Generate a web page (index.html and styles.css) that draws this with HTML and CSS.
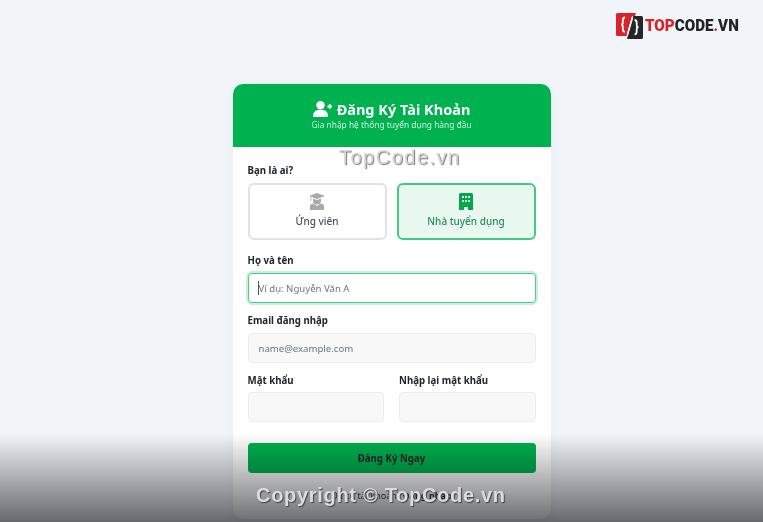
FILE: index.html
```html
<!DOCTYPE html>
<html lang="vi">

<head>
    <meta charset="UTF-8">
    <meta name="viewport" content="width=device-width, initial-scale=1.0">
    <title>Đăng Ký Tài Khoản</title>
    <link rel="stylesheet" href="styles.css">
</head>

<body>
    <div class="site-logo">
        <svg class="site-logo-icon" viewBox="0 0 27 27" width="27" height="27">
            <path d="M1.500 1H20l-1 3h-3L10.500 24H1.500A1.500 1.500 0 0 1 0 22.500V2.500A1.500 1.500 0 0 1 1.500 1z" fill="#d8232a" />
            <path d="M17 4h8.500A1.500 1.500 0 0 1 27 5.500V25.500A1.500 1.500 0 0 1 25.500 27H11z" fill="#262626" />
            <path d="M9 5.500c-2 0-2.200 1-2.200 2.800v2.400c0 1-0.800 2-1.800 2 1 0 1.800 1 1.800 2v2.400c0 1.800 0.200 2.800 2.200 2.800" fill="none" stroke="#fff" stroke-width="1.800" />
            <path d="M18.500 8c2 0 2.200 1 2.200 2.800v2.400c0 1 0.800 2 1.800 2-1 0-1.800 1-1.800 2v2.400c0 1.800-0.200 2.800-2.200 2.800" fill="none" stroke="#fff" stroke-width="1.800" />
            <path d="M16.500 5.500l-5 17" fill="none" stroke="#fff" stroke-width="1.600" />
        </svg>
        <span class="site-logo-text"><span class="logo-red">TOP</span>CODE<span class="logo-red">.</span>VN</span>
    </div>

    <main class="register-card">
        <div class="register-head">
            <h1 class="register-title">
                <svg class="register-title-icon" viewBox="0 0 20 16" width="20" height="16">
                    <circle cx="7.500" cy="4.200" r="4.200" fill="#fff" />
                    <path d="M0 16v-1.500c0-3 2.500-5.500 5-5.500h5c2.500 0 5 2.500 5 5.500V16z" fill="#fff" />
                    <path d="M16.800 3.200v4.600M14.500 5.500h4.600" stroke="#fff" stroke-width="1.800" />
                </svg>
                Đăng Ký Tài Khoản
            </h1>
            <p class="register-subtitle">Gia nhập hệ thống tuyển dụng hàng đầu</p>
        </div>

        <form class="register-form">
            <div class="form-group form-group-role">
                <label class="form-label">Bạn là ai?</label>
                <div class="role-list">
                    <div class="role-option">
                        <svg viewBox="0 0 16 17" width="16" height="17">
                            <path d="M8 0L0 3l8 3 8-3z" fill="#a9a9a9" />
                            <path d="M1.500 4v4h0.800V4.300z" fill="#a9a9a9" />
                            <path d="M4 5.600v1.900a4 4 0 0 0 8 0V5.600L8 7z" fill="#a9a9a9" />
                            <path d="M1 12.500c0-1 2-2 3.500-2L8 13l3.500-2.500c1.500 0 3.500 1 3.500 2V17H1z" fill="#a9a9a9" />
                        </svg>
                        <span>Ứng viên</span>
                    </div>
                    <div class="role-option role-option-active">
                        <svg viewBox="0 0 14 17" width="14" height="17">
                            <path fill-rule="evenodd" fill="#00a84b" d="M1.500 0h11A1.500 1.500 0 0 1 14 1.500V17H9v-3H5v3H0V1.500A1.500 1.500 0 0 1 1.500 0zM3 3v2h2V3zm3 0v2h2V3zm3 0v2h2V3zM3 7v2h2V7zm3 0v2h2V7zm3 0v2h2V7z" />
                        </svg>
                        <span>Nhà tuyển dụng</span>
                    </div>
                </div>
            </div>

            <div class="form-group">
                <label class="form-label" for="full-name">Họ và tên</label>
                <input class="form-input form-input-focus" id="full-name" type="text" placeholder="Ví dụ: Nguyễn Văn A">
                <span class="input-caret"></span>
            </div>

            <div class="form-group">
                <label class="form-label" for="email">Email đăng nhập</label>
                <input class="form-input" id="email" type="text" placeholder="name@example.com">
            </div>

            <div class="form-row">
                <div class="form-group">
                    <label class="form-label" for="password">Mật khẩu</label>
                    <input class="form-input" id="password" type="password">
                </div>
                <div class="form-group">
                    <label class="form-label" for="password-again">Nhập lại mật khẩu</label>
                    <input class="form-input" id="password-again" type="password">
                </div>
            </div>

            <button class="register-submit" type="button">Đăng Ký Ngay</button>
            <p class="register-footer">Đã có tài khoản? <a href="#">Đăng nhập</a></p>
        </form>
    </main>

    <!-- video overlay on top of the page -->
    <div class="bottom-shade"></div>
    <div class="watermark watermark-top">TopCode.vn</div>
    <div class="watermark watermark-bottom">Copyright © TopCode.vn</div>
</body>

</html>
```

FILE: styles.css
```css
* {
    box-sizing: border-box;
}

html,
body {
    height: 522px;
    overflow: hidden;
}

body {
    margin: 0;
    padding-top: 84px;
    padding-left: 20px;
    background-color: #f1f4f9;
    font-family: "Noto Sans", "Open Sans", sans-serif;
    display: flex;
    flex-direction: column;
    align-items: center;
}

p,
h1 {
    margin: 0;
}

.site-logo {
    position: absolute;
    top: 12px;
    left: 616px;
    display: flex;
    align-items: center;
    gap: 2px;
}

.site-logo-text {
    font-family: "Roboto", sans-serif;
    font-size: 16.500px;
    font-weight: 900;
    color: #222222;
    transform: scaleX(0.92);
    transform-origin: left center;
}

.logo-red {
    color: #d8232a;
}

.register-card {
    width: 318px;
    height: 435px;
    background-color: white;
    border-radius: 10px;
    overflow: hidden;
    box-shadow: 0 2px 10px rgba(0, 0, 0, 0.05);
}

.register-head {
    height: 63px;
    background-color: #00b14f;
    color: white;
    text-align: center;
    padding-top: 14px;
}

.register-title {
    font-size: 14.500px;
    font-weight: 700;
    line-height: 22px;
    display: flex;
    align-items: center;
    justify-content: center;
    gap: 4px;
}

.register-subtitle {
    font-size: 8.400px;
    line-height: 10px;
    opacity: 0.8;
}

.register-form {
    padding: 17px 15px 0;
    display: flex;
    flex-direction: column;
    gap: 11px;
}

.form-group {
    position: relative;
    display: flex;
    flex-direction: column;
    gap: 5px;
    flex: 1;
}

.form-group-role {
    margin-bottom: 3px;
}

.form-label {
    font-size: 9.700px;
    font-weight: 700;
    line-height: 14px;
    color: #212529;
}

.role-list {
    display: flex;
    gap: 10px;
}

.role-option {
    flex: 1 1 0;
    height: 57px;
    border: 2px solid #e2e2e2;
    border-radius: 6px;
    display: flex;
    flex-direction: column;
    align-items: center;
    justify-content: flex-end;
    gap: 4px;
    padding-bottom: 10px;
    font-size: 10px;
    font-weight: 500;
    color: #495057;
}

.role-option-active {
    border-color: #45c885;
    background-color: #e8f8ef;
    color: #2a8a5c;
}

.form-input {
    width: 100%;
    height: 30px;
    padding: 0 10px;
    border: 1px solid #ececec;
    border-radius: 4px;
    background-color: #f8f8f8;
    font-family: "Noto Sans", "Open Sans", sans-serif;
    font-size: 9.600px;
    outline: none;
}

.form-input::placeholder {
    color: #6c757d;
}

.form-input-focus {
    background-color: white;
    border-color: #52c98a;
    box-shadow: 0 0 0 2px rgba(0, 177, 79, 0.2);
}

.input-caret {
    position: absolute;
    left: 10px;
    bottom: 8px;
    width: 1px;
    height: 14px;
    background-color: #555555;
}

.form-row {
    display: flex;
    gap: 15px;
}

.form-row .form-group {
    gap: 4px;
}

.register-submit {
    height: 30px;
    margin-top: 10px;
    border: none;
    border-radius: 4px;
    background-color: #00b14f;
    color: #212529;
    font-family: "Noto Sans", "Open Sans", sans-serif;
    font-size: 9.700px;
    font-weight: 700;
}

.register-footer {
    text-align: center;
    font-size: 9px;
    color: #444444;
    margin-top: 5px;
}

.register-footer a {
    color: #333333;
    text-decoration: none;
    font-weight: 700;
}

.bottom-shade {
    position: absolute;
    left: 0;
    right: 0;
    top: 434px;
    height: 88px;
    background: linear-gradient(to bottom, #ffffff, #6c6d70);
    mix-blend-mode: multiply;
}

.watermark {
    position: absolute;
    font-family: "Liberation Sans", sans-serif;
    font-weight: 700;
    white-space: nowrap;
}

.watermark-top {
    top: 146px;
    left: 339px;
    font-size: 20px;
    font-weight: 400;
    letter-spacing: 1.500px;
    color: #d6d6d6;
    text-shadow: 1px 1px 1px #777777;
}

.watermark-bottom {
    top: 484px;
    left: 256px;
    font-size: 20px;
    letter-spacing: 0.700px;
    color: #dcdcdc;
    text-shadow: 1px 1px 1px #444444;
}
```
